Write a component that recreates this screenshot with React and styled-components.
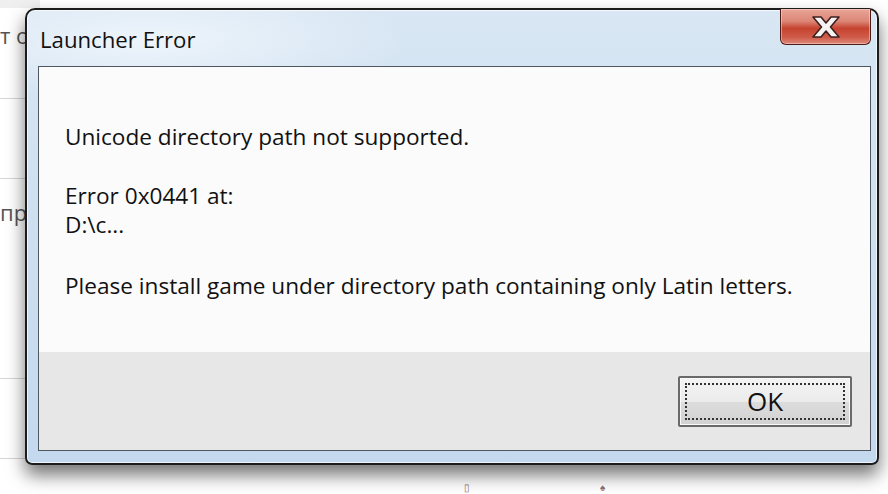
import styled, { createGlobalStyle } from 'styled-components';

const Global = createGlobalStyle`
  html, body {
    margin: 0;
    padding: 0;
    background: #ffffff;
  }
`;

const Desktop = styled.div`
  position: relative;
  width: 888px;
  height: 494px;
  overflow: hidden;
  background: #ffffff;
  font-family: "Open Sans", "Noto Sans", sans-serif;
`;

const Backdrop = styled.div`
  display: flex;
  flex-direction: column;
  width: 40px;
`;

const BackRow = styled.div`
  height: ${p => p.h}px;
  border-bottom: 1px solid ${p => (p.line ? '#d6d6d6' : 'transparent')};
  box-sizing: border-box;
  display: flex;
  align-items: ${p => p.align || 'center'};
  padding-top: ${p => p.pt || 0}px;
  font-size: 22px;
  color: #555;
  white-space: nowrap;
  background: ${p => p.bg || 'transparent'};
`;

const BottomMarks = styled.div`
  position: absolute;
  left: 0;
  right: 0;
  bottom: 1px;
  height: 12px;
  display: flex;
  gap: 130px;
  padding-left: 464px;
  font-size: 10px;
  color: #8a7070;
  line-height: 12px;
`;

const Window = styled.div`
  position: absolute;
  left: 25px;
  top: 8px;
  width: 854px;
  height: 457px;
  box-sizing: border-box;
  border: 2px solid #1c1c1c;
  border-radius: 10px 10px 7px 7px;
  background:
    radial-gradient(ellipse 260px 60px at 120px 30px, rgba(240, 246, 252, 0.9), rgba(240, 246, 252, 0)),
    linear-gradient(180deg, #d9e7f4 0%, #cfe0f0 40%, #c4d9ee 100%);
  box-shadow: 0 10px 18px rgba(0, 0, 0, 0.55), inset 0 0 0 1px rgba(255, 255, 255, 0.7);
  display: flex;
  flex-direction: column;
  padding: 0 6px 12px 11px;
`;

const TitleBar = styled.div`
  height: 56px;
  display: flex;
  justify-content: space-between;
  align-items: flex-start;
`;

const Title = styled.div`
  padding: 14px 0 0 2px;
  font-size: 22.2px;
  color: #111;
`;

const CloseButton = styled.div`
  width: 91px;
  height: 36px;
  margin-top: -1px;
  box-sizing: border-box;
  border: 1px solid #4a1d18;
  border-top: none;
  border-radius: 0 0 6px 6px;
  background: linear-gradient(180deg, #e9a597 0%, #dc8676 35%, #c64330 55%, #cf5a48 80%, #e0887a 100%);
  box-shadow: inset 0 0 0 1px rgba(255, 220, 210, 0.5);
  display: flex;
  align-items: center;
  justify-content: center;
`;

const Client = styled.div`
  flex: 1;
  display: flex;
  flex-direction: column;
  border: 1px solid #4f5861;
  background: #e8e7e7;
`;

const Message = styled.div`
  height: 285px;
  background: #fbfbfb;
  padding: 55px 0 0 26px;
  box-sizing: border-box;
  display: flex;
  flex-direction: column;
`;

const Line = styled.div`
  font-size: 22.6px;
  line-height: 29px;
  color: #111;
  margin-top: ${p => p.gap || 0}px;
`;

const Footer = styled.div`
  flex: 1;
  display: flex;
  align-items: center;
  justify-content: flex-end;
  padding-right: 18px;
`;

const OkButton = styled.div`
  width: 174px;
  height: 51px;
  box-sizing: border-box;
  border: 2px solid #6a6a6a;
  border-radius: 2px;
  background: linear-gradient(180deg, #f4f4f4 0%, #ebebeb 50%, #dcdcdc 51%, #d2d2d2 100%);
  box-shadow: inset 0 0 0 1px #fafafa;
  padding: 5px;
  display: flex;
`;

const FocusRect = styled.div`
  flex: 1;
  border: 2px dotted #333;
  display: flex;
  align-items: center;
  justify-content: center;
  font-size: 26px;
  color: #111;
`;

const CloseGlyph = () => (
  <svg width="34" height="24" viewBox="0 0 34 24">
    <path
      d="M4 2 L12 2 L17 8 L22 2 L30 2 L21.5 12 L30 22 L22 22 L17 16 L12 22 L4 22 L12.5 12 Z"
      fill="#f7f3f3"
      stroke="#3c2020"
      strokeWidth="1.6"
      strokeLinejoin="round"
    />
  </svg>
);

export default function App() {
  return (
    <Desktop>
      <Global />
      <Backdrop>
        <BackRow h={8} bg="#efefef" />
        <BackRow h={91} line align="flex-start" pt={12}>т о</BackRow>
        <BackRow h={80} line />
        <BackRow h={60} align="flex-start" pt={18}>пр</BackRow>
        <BackRow h={140} line />
        <BackRow h={80} line />
      </Backdrop>
      <BottomMarks>
        <span>▯</span>
        <span>♠</span>
      </BottomMarks>
      <Window>
        <TitleBar>
          <Title>Launcher Error</Title>
          <CloseButton>
            <CloseGlyph />
          </CloseButton>
        </TitleBar>
        <Client>
          <Message>
            <Line>Unicode directory path not supported.</Line>
            <Line gap={30}>Error 0x0441 at:</Line>
            <Line>D:\c...</Line>
            <Line gap={32}>Please install game under directory path containing only Latin letters.</Line>
          </Message>
          <Footer>
            <OkButton>
              <FocusRect>OK</FocusRect>
            </OkButton>
          </Footer>
        </Client>
      </Window>
    </Desktop>
  );
}
